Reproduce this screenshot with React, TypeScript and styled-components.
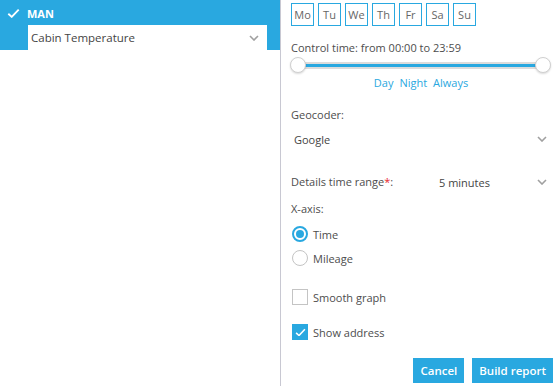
import React from 'react';
import styled, { createGlobalStyle } from 'styled-components';

const blue = '#29a8e0';
const text = '#4d4d4d';

const GlobalStyle = createGlobalStyle`
    html, body {
        margin: 0;
        padding: 0;
        background: #fff;
    }
    body {
        font-family: "Open Sans", "Liberation Sans", sans-serif;
        font-size: 11px;
        color: ${text};
    }
`;

const Page = styled.div`
    display: flex;
    width: 559px;
    height: 386px;
    overflow: hidden;
`;

const LeftPanel = styled.div`
    width: 280px;
    flex-shrink: 0;
    border-right: 1px solid #c8c8d2;
    display: flex;
    flex-direction: column;
`;

const UnitHeader = styled.div`
    background: ${blue};
    height: 50px;
    box-sizing: border-box;
    padding: 5px 13px 0 7px;
    display: flex;
    flex-direction: column;
`;

const UnitTitle = styled.div`
    display: flex;
    align-items: center;
    gap: 7px;
    color: #fff;
    font-weight: 700;
    font-size: 11px;
    height: 16px;
    margin-bottom: 4px;
`;

const SensorSelect = styled.div`
    margin-left: 21px;
    height: 25px;
    background: #fff;
    display: flex;
    align-items: center;
    justify-content: space-between;
    padding: 0 8px 0 3px;
    color: #444;
    font-size: 11.5px;
`;

const RightPanel = styled.div`
    flex: 1;
    padding: 3px 6px 0 10px;
    display: flex;
    flex-direction: column;
`;

const Days = styled.div`
    display: flex;
    gap: 4px;
`;

const DayBtn = styled.div`
    height: 21px;
    min-width: 17px;
    padding: 0 2px;
    border: 1px solid ${blue};
    display: flex;
    align-items: center;
    justify-content: center;
    color: #666;
    font-size: 11px;
`;

const FieldLabel = styled.div<{ mt?: number }>`
    margin-top: ${p => p.mt ?? 0}px;
    line-height: 14px;
`;

const Slider = styled.div`
    position: relative;
    height: 16px;
    margin: 2px 2px 0 0;
    padding: 0 8px 0 7px;
    display: flex;
    align-items: center;
`;

const Track = styled.div`
    flex: 1;
    height: 3px;
    background: ${blue};
    border: 2px solid #dcdcdc;
    border-left: 0;
    border-right: 0;
`;

const Handle = styled.div<{ side: 'left' | 'right' }>`
    position: absolute;
    top: 0;
    ${p => (p.side === 'left' ? 'left: -1px;' : 'right: 0;')}
    width: 14px;
    height: 14px;
    border-radius: 50%;
    background: #fff;
    border: 1px solid #d0d0d0;
    box-shadow: 0 1px 2px rgba(0, 0, 0, 0.15);
`;

const Presets = styled.div`
    display: flex;
    justify-content: center;
    gap: 6px;
    color: ${blue};
    margin-top: 2px;
    padding-right: 2px;
`;

const Select = styled.div<{ mt?: number }>`
    height: 24px;
    margin-top: ${p => p.mt ?? 0}px;
    display: flex;
    align-items: center;
    justify-content: space-between;
    padding: 0 6px 0 3px;
    color: #444;
`;

const InlineField = styled.div`
    display: flex;
    align-items: center;
    margin-top: 19px;
    & > ${FieldLabel} {
        width: 145px;
    }
    & > ${Select} {
        flex: 1;
    }
`;

const Req = styled.span`
    color: #e8262a;
`;

const OptionRow = styled.div<{ mt?: number }>`
    display: flex;
    align-items: center;
    gap: 5px;
    margin-top: ${p => p.mt ?? 0}px;
    height: 16px;
`;

const Radio = styled.div<{ checked?: boolean }>`
    width: 16px;
    height: 16px;
    box-sizing: border-box;
    border-radius: 50%;
    border: ${p => (p.checked ? `2px solid ${blue}` : '1px solid #c4c4c4')};
    display: flex;
    align-items: center;
    justify-content: center;
    margin-left: 1px;
    &::after {
        content: '';
        display: ${p => (p.checked ? 'block' : 'none')};
        width: 8px;
        height: 8px;
        border-radius: 50%;
        background: ${blue};
    }
`;

const Checkbox = styled.div<{ checked?: boolean }>`
    width: 16px;
    height: 16px;
    box-sizing: border-box;
    margin-left: 1px;
    border: ${p => (p.checked ? 'none' : '1px solid #c4c4c4')};
    background: ${p => (p.checked ? blue : '#fff')};
    display: flex;
    align-items: center;
    justify-content: center;
`;

const Footer = styled.div`
    display: flex;
    justify-content: flex-end;
    gap: 8px;
    margin-top: 18px;
`;

const Button = styled.button`
    height: 25px;
    border: none;
    background: ${blue};
    color: #fff;
    font-family: "Open Sans", "Liberation Sans", sans-serif;
    font-size: 11.5px;
    font-weight: 600;
    padding: 0 7px;
    cursor: pointer;
`;

const Chevron = () => (
    <svg width="10" height="6" viewBox="0 0 10 6">
        <path d="M1 1 L5 5 L9 1" fill="none" stroke="#a0a0a0" strokeWidth="1.6" />
    </svg>
);

const Tick = ({ color, size }: { color: string; size: number }) => (
    <svg width={size} height={size * 0.8} viewBox="0 0 12 10">
        <path d="M1 5.5 L4.3 8.5 L11 1.5" fill="none" stroke={color} strokeWidth="1.8" />
    </svg>
);

const days = ['Mo', 'Tu', 'We', 'Th', 'Fr', 'Sa', 'Su'];

export default function App() {
    return (
        <Page>
            <GlobalStyle />
            <LeftPanel>
                <UnitHeader>
                    <UnitTitle>
                        <Tick color="#fff" size={13} />
                        MAN
                    </UnitTitle>
                    <SensorSelect>
                        Cabin Temperature
                        <Chevron />
                    </SensorSelect>
                </UnitHeader>
            </LeftPanel>
            <RightPanel>
                <Days>
                    {days.map(d => (
                        <DayBtn key={d}>{d}</DayBtn>
                    ))}
                </Days>
                <FieldLabel mt={15}>Control time: from 00:00 to 23:59</FieldLabel>
                <Slider>
                    <Track />
                    <Handle side="left" />
                    <Handle side="right" />
                </Slider>
                <Presets>
                    <span>Day</span>
                    <span>Night</span>
                    <span>Always</span>
                </Presets>
                <FieldLabel mt={18}>Geocoder:</FieldLabel>
                <Select mt={5}>
                    Google
                    <Chevron />
                </Select>
                <InlineField>
                    <FieldLabel>
                        Details time range<Req>*</Req>:
                    </FieldLabel>
                    <Select>
                        5 minutes
                        <Chevron />
                    </Select>
                </InlineField>
                <FieldLabel mt={8}>X-axis:</FieldLabel>
                <OptionRow mt={10}>
                    <Radio checked />
                    Time
                </OptionRow>
                <OptionRow mt={8}>
                    <Radio />
                    Mileage
                </OptionRow>
                <OptionRow mt={23}>
                    <Checkbox />
                    Smooth graph
                </OptionRow>
                <OptionRow mt={19}>
                    <Checkbox checked>
                        <Tick color="#fff" size={11} />
                    </Checkbox>
                    Show address
                </OptionRow>
                <Footer>
                    <Button>Cancel</Button>
                    <Button>Build report</Button>
                </Footer>
            </RightPanel>
        </Page>
    );
}
